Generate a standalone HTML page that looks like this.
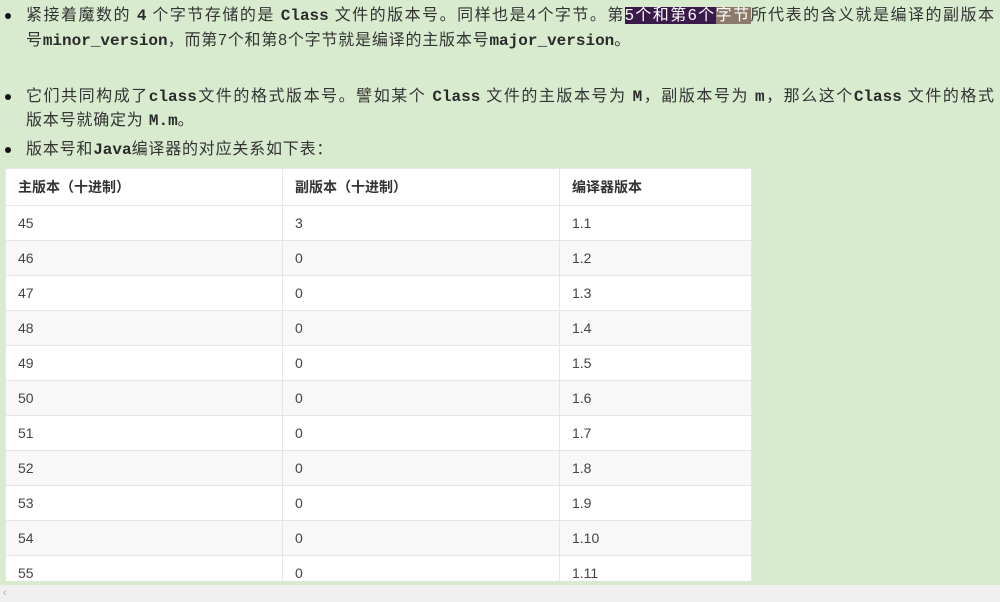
<!DOCTYPE html>
<html><head><meta charset="utf-8"><style>
body{margin:0;width:1000px;height:602px;overflow:hidden;background:#d8ebcf;font-family:"Liberation Sans","Noto Sans CJK SC",sans-serif;color:#333;position:relative}
.l{position:absolute;left:26px;font-size:16px;line-height:25px;white-space:nowrap;letter-spacing:0.8px}
.j{width:968px;text-align:justify;text-align-last:justify;letter-spacing:0}
.b:before{content:"";position:absolute;left:-21px;top:10px;width:6px;height:6px;border-radius:50%;background:#111}
code{font-family:"Liberation Mono",monospace;font-size:16px;font-weight:bold;color:#2a2a2a;letter-spacing:0}
.hl{background:#3a1a4a;color:#fff}
.hl2{background:#8b7a6a;color:#fff}
table{position:absolute;left:5px;top:168px;width:747px;border-collapse:collapse;font-size:14px;color:#444;background:#fff}
td,th{border:1px solid #e6e6e6;height:34px;padding:0 12px;text-align:left;font-weight:normal}
th{font-weight:bold;height:36px;color:#333}
tr:nth-child(odd) td{background:#f8f8f8}
.sb{position:absolute;left:0;top:585px;width:1000px;height:17px;background:#f0f0f0;font-size:11px;color:#aaa;line-height:17px;padding-left:3px}
.wrap{position:absolute;left:0;top:0;width:1000px;height:581px;overflow:hidden}
</style></head><body>
<div class="wrap">
<div class="l j b" style="top:3px">紧接着魔数的 <code>4</code> 个字节存储的是 <code>Class</code> 文件的版本号。同样也是4个字节。第<span class="hl">5个和第6个</span><span class="hl2">字节</span>所代表的含义就是编译的副版本</div>
<div class="l" style="top:28px">号<code>minor_version</code>，而第7个和第8个字节就是编译的主版本号<code>major_version</code>。</div>
<div class="l j b" style="top:84px">它们共同构成了<code>class</code>文件的格式版本号。譬如某个 <code>Class</code> 文件的主版本号为 <code>M</code>，副版本号为 <code>m</code>，那么这个<code>Class</code> 文件的格式</div>
<div class="l" style="top:108px">版本号就确定为 <code>M.m</code>。</div>
<div class="l b" style="top:137px">版本号和<code>Java</code>编译器的对应关系如下表：</div>
<table>
<tr><th style="width:252px">主版本（十进制）</th><th style="width:252px">副版本（十进制）</th><th>编译器版本</th></tr>
<tr><td>45</td><td>3</td><td>1.1</td></tr>
<tr><td>46</td><td>0</td><td>1.2</td></tr>
<tr><td>47</td><td>0</td><td>1.3</td></tr>
<tr><td>48</td><td>0</td><td>1.4</td></tr>
<tr><td>49</td><td>0</td><td>1.5</td></tr>
<tr><td>50</td><td>0</td><td>1.6</td></tr>
<tr><td>51</td><td>0</td><td>1.7</td></tr>
<tr><td>52</td><td>0</td><td>1.8</td></tr>
<tr><td>53</td><td>0</td><td>1.9</td></tr>
<tr><td>54</td><td>0</td><td>1.10</td></tr>
<tr><td>55</td><td>0</td><td>1.11</td></tr>
</table>
</div>
<div class="sb">&lsaquo;</div>
</body></html>
